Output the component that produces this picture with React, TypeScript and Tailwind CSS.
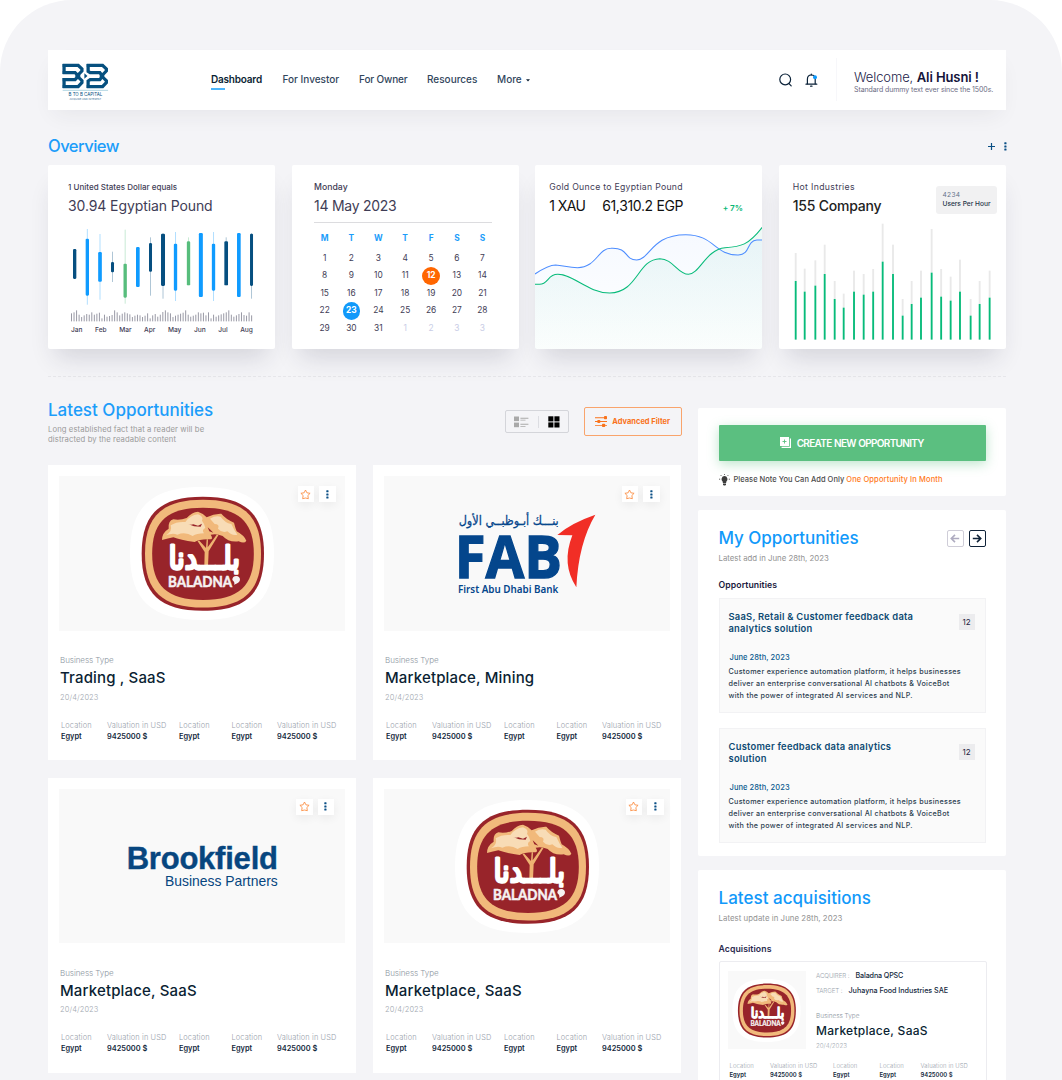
import React from "react";

/* ---------- small icons ---------- */

function SearchIcon() {
  return (
    <svg width="14" height="14" viewBox="0 0 14 14" fill="none" stroke="#0b2239" strokeWidth="1.2" strokeLinecap="round">
      <circle cx="6.2" cy="6.4" r="5.4" />
      <path d="M10 10.6 12.2 12.8" />
    </svg>
  );
}

function BellIcon() {
  return (
    <svg width="13" height="14" viewBox="0 0 13 14" fill="none" stroke="#0b2239" strokeWidth="1.2" strokeLinecap="round" strokeLinejoin="round">
      <path d="M2.4 10.8V6.2C2.4 3.8 4 2 6.3 2s3.9 1.8 3.9 4.2v4.6" />
      <path d="M1 11.2H11.8M6.3 1V1.8M5.6 13.2H7" />
      <circle cx="10" cy="4.2" r="2" fill="#0f9bff" stroke="none" />
    </svg>
  );
}

function Dots() {
  return (
    <svg width="3" height="9" viewBox="0 0 3 9" fill="#0a4f85">
      <rect x=".3" y=".3" width="2.2" height="2" rx=".5" />
      <rect x=".3" y="3.4" width="2.2" height="2" rx=".5" />
      <rect x=".3" y="6.5" width="2.2" height="2" rx=".5" />
    </svg>
  );
}

function Star() {
  return (
    <svg width="11" height="11" viewBox="0 0 22 22" fill="none" stroke="#fb8a3c" strokeWidth="1.7" strokeLinejoin="round">
      <path d="M11 2 13.8 7.6 20.2 8.6 15.7 13 16.7 19.4 11 18 5.3 19.4 6.3 13 1.8 8.6 8.2 7.6Z" />
    </svg>
  );
}

function Arrow({ flip }: { flip?: boolean }) {
  return (
    <svg width="10" height="9" viewBox="0 0 10 9" fill="none" stroke="currentColor" strokeWidth="1.6" className={flip ? "rotate-180" : ""}>
      <path d="M.8 4.5H8.6M5 .9 8.7 4.5 5 8.1" />
    </svg>
  );
}

/* ---------- logos ---------- */

function BrandLogo() {
  return (
    <svg width="49.5" height="38" viewBox="178 189 144 114" preserveAspectRatio="none" fill="none">
      <g stroke="#06507f" strokeWidth="9.5" strokeLinejoin="miter">
        <path d="M180 196H225L236 207V213L222 228L236 242V248L225 260H180" />
        <path d="M184 192V222M184 234V264" />
        <path d="M180 218H216L226 228L216 239H180" />
        <path d="M250 196H296L307 207V213L293 228L307 242V248L296 260H250" />
        <path d="M254 192V214L260 218H288L296 228L288 239H260L254 243V264" />
      </g>
      <path d="M243 220 252 228 243 236Z" fill="#06507f" />
      <path d="M180 271H312" stroke="#8fc3d6" strokeWidth="2" />
      <text x="197" y="287" fontSize="15" textLength="98" lengthAdjust="spacingAndGlyphs" fill="#06507f" className="font-['Inter']">B TO B CAPITAL</text>
      <text x="200" y="299" fontSize="8" textLength="92" lengthAdjust="spacingAndGlyphs" fill="#3c7399" className="font-['Inter']">ACQUIRE AND INTEREST</text>
    </svg>
  );
}

function blob(cx: number, cy: number, rx: number, ry: number) {
  const k = 0.7;
  const a = rx * k;
  const b = ry * k;
  return `M${cx} ${cy - ry}C${cx + a} ${cy - ry} ${cx + rx} ${cy - b} ${cx + rx} ${cy}S${cx + a} ${cy + ry} ${cx} ${cy + ry}S${cx - rx} ${cy + b} ${cx - rx} ${cy}S${cx - a} ${cy - ry} ${cx} ${cy - ry}Z`;
}

function BaladnaLogo({ className }: { className: string }) {
  return (
    <svg viewBox="270 291 432 399" className={className}>
      <path d={blob(486, 490.5, 216, 199.5)} fill="#fff" />
      <path d={blob(488.5, 491, 183.5, 171)} fill="#98242a" />
      <path d={blob(489, 491, 174, 161.5)} fill="#f1b97b" />
      <path d={blob(489, 491.5, 152.5, 138.5)} fill="#98242a" />
      <path d="M493 528 494 486 472 452H478L498 474 500 448H504L503 472 530 434H536L506 484 504 528Z" fill="#eeb372" />
      <path d="M366 450Q366 428 386 416Q384 392 400 388Q420 392 440 384Q456 366 474 365Q490 370 500 382Q522 370 544 371Q556 386 582 398Q586 414 590 424Q612 436 619 452Q614 462 596 454Q566 458 548 438Q530 430 512 434Q520 446 512 448Q480 446 464 456Q420 450 400 442Q384 446 366 450Z" fill="#f1b97b" />
      <path d="M378 436Q398 424 392 406Q410 394 436 396Q450 376 474 373Q492 380 486 392Q494 402 496 414Q484 420 492 430Q470 430 458 438Q436 424 412 434Q398 428 378 436Z" fill="#f8dcb6" />
      <path d="M510 386Q526 376 542 380Q554 398 574 402Q582 420 592 434Q576 438 562 424Q546 430 534 416Q540 402 524 402Z" fill="#f8dcb6" />
      <path d="M444 402Q452 406 460 403L474 407 486 401 482 410 462 409ZM503 412 512 420 520 428 508 424Z" fill="#98242a" />
      <text x="386" y="538" fontSize="94" textLength="214" lengthAdjust="spacingAndGlyphs" fill="#fff" stroke="#fff" strokeWidth="9" strokeLinejoin="round" className="font-['DejaVu_Sans']">بلـــدنا</text>
      <text x="384" y="590" fontSize="43" fontWeight="700" textLength="192" lengthAdjust="spacingAndGlyphs" fill="#f6f2f2" stroke="#f6f2f2" strokeWidth="1.5" className="font-['Lato']">BALADNA</text>
      <path d="M577 570Q577 558 589 558Q600 559 600 570Q598 580 582 584Q586 578 577 570Z" fill="#f6f2f2" />
    </svg>
  );
}

function FabLogo() {
  return (
    <svg viewBox="266 370 410 245" className="mt-[3px] h-[81.7px] w-[136.7px] overflow-visible">
      <g fill="#04468c">
        <text x="265" y="404" fontSize="38" textLength="300" lengthAdjust="spacingAndGlyphs" stroke="#04468c" strokeWidth=".8" className="font-['DejaVu_Sans']">بنـــك أبـوظبــي الأول</text>
        <text x="253" y="561" fontSize="176" fontWeight="700" textLength="322" lengthAdjust="spacingAndGlyphs" stroke="#04468c" strokeWidth="4" className="font-['Open_Sans']">FAB</text>
        <text x="263" y="608" fontSize="31" fontWeight="600" textLength="301" lengthAdjust="spacingAndGlyphs" className="font-['Noto_Sans']">First Abu Dhabi Bank</text>
      </g>
      <path d="M675 372Q624 458 618 590Q572 520 606 434L561 433Q600 398 675 372Z" fill="#f12e26" />
    </svg>
  );
}

function BrookfieldLogo() {
  return (
    <div className="mt-[3px] ml-[-1.5px] flex w-[153px] flex-col items-end font-['Liberation_Sans'] text-[#07467f]">
      <span className="text-[31px] leading-[26px] font-bold tracking-[-0.22px] whitespace-nowrap [-webkit-text-stroke:0.4px_#07467f]">Brookfield</span>
      <span className="mt-[1.5px] text-[13.9px] leading-[16px] whitespace-nowrap">Business Partners</span>
    </div>
  );
}

/* ---------- header ---------- */

function Header() {
  return (
    <header className="flex h-[60.5px] items-center bg-white shadow-[0_10px_22px_-6px_rgba(40,40,60,0.07)]">
      <div className="ml-[13.5px] w-[149.5px] pt-[4px]">
        <BrandLogo />
      </div>
      <nav className="mt-[-1px] flex items-center gap-[20.5px] text-[10px] leading-[14px] font-medium text-[#31465c]">
        <a className="relative w-[51px] font-semibold tracking-[-0.2px] whitespace-nowrap text-[#0b1f33]">
          Dashboard
          <span className="absolute top-[15.5px] left-0 h-[2px] w-[14px] bg-[#4cb5fb]" />
        </a>
        <a className="w-[56px] whitespace-nowrap">For Investor</a>
        <a className="w-[47.5px] tracking-[-0.15px] whitespace-nowrap">For Owner</a>
        <a className="w-[49.5px] whitespace-nowrap">Resources</a>
        <a className="flex items-center gap-[4px] whitespace-nowrap">
          More
          <svg width="4" height="3" viewBox="0 0 4 3" fill="#0b1f33" className="mt-[2px]"><path d="M0 .3H4L2 2.6Z" /></svg>
        </a>
      </nav>
      <div className="ml-auto flex items-center">
        <SearchIcon />
        <span className="ml-[12.5px]"><BellIcon /></span>
        <span className="ml-[17.5px] h-[43px] w-px bg-[#f7f7fa]" />
        <div className="ml-[17.5px] w-[152px] pt-[4px]">
          <p className="text-[13px] leading-[16px] font-light tracking-[-0.1px] whitespace-nowrap text-[#23234a]">
            Welcome, <b className="font-semibold text-[#14143a]">Ali Husni !</b>
          </p>
          <p className="text-[7px] leading-[10px] tracking-[-0.09px] whitespace-nowrap text-[#6c6c84]">Standard dummy text ever since the 1500s.</p>
        </div>
      </div>
    </header>
  );
}

/* ---------- overview ---------- */

const statCard = "relative flex h-[184px] flex-col rounded-[2px] bg-white shadow-[0_16px_24px_-8px_rgba(40,40,70,0.16)]";

// x, wick top, wick bottom, body top, body bottom, colour, body width
const candles: [number, number, number, number, number, string, number][] = [
  [104, 267, 357, 267, 357, "#064f80", 10],
  [142, 207, 434, 236, 407, "#0f9bff", 10],
  [180, 222, 419, 276, 365, "#0f9bff", 11],
  [217.5, 275, 366, 306, 337, "#064f80", 9],
  [255.5, 209, 431, 311, 413, "#57bd7c", 10],
  [293.5, 261, 381, 261, 381, "#0f9bff", 11],
  [331.5, 232, 407, 249, 335, "#064f80", 9],
  [369, 220, 416, 221, 378, "#064f80", 12],
  [406.5, 216, 423, 251, 392, "#0f9bff", 10],
  [445.5, 232, 376, 244, 376, "#57bd7c", 10],
  [482.5, 219, 411, 219, 411, "#0f9bff", 12],
  [520.5, 216, 423, 251, 392, "#0f9bff", 10],
  [558.5, 232, 376, 244, 376, "#064f80", 11],
  [596.5, 219, 411, 219, 411, "#0f9bff", 11],
  [634.5, 220, 416, 221, 378, "#064f80", 9],
];

const volume = [24, 27, 33, 20, 13, 18, 22, 20, 27, 20, 23, 26, 9, 20, 14, 16, 19, 33, 27, 18, 23, 27, 24, 21, 13, 17, 20, 18, 13, 17, 24, 9, 18, 22, 14, 20, 28, 33, 27, 24, 13, 17, 20, 23, 26, 33, 20, 14, 17, 20, 27, 24, 26, 18, 27, 9, 20, 14, 18, 21, 24, 27, 33, 20, 14, 18, 22, 27, 19, 17, 27, 18];

function DollarCard() {
  return (
    <section className={statCard}>
      <div className="pt-[16px] pl-[20px] text-[#3f3d56]">
        <p className="text-[8px] leading-[13px] font-medium tracking-[0.02px] whitespace-nowrap">1 United States Dollar equals</p>
        <p className="mt-[3px] text-[14px] leading-[18px] tracking-[-0.1px] whitespace-nowrap">30.94 Egyptian Pound</p>
      </div>
      <svg viewBox="90 204 560 284" className="mt-[13px] ml-[22px] h-[94.7px] w-[186.7px]">
        {candles.map(([x, wt, wb, t, b, c, w]) => (
          <g key={x}>
            <rect x={x - 1.5} y={wt} width="3" height={wb - wt} fill={c} opacity=".32" />
            <rect x={x - w / 2} y={t} width={w} height={b - t} rx="3.5" fill={c} />
          </g>
        ))}
        {volume.map((h, i) => (
          <rect key={i} x={93 + i * 7.61} y={484 - h} width="3" height={h} fill="#9a9aa6" />
        ))}
      </svg>
      <div className="mt-[2px] ml-[23px] flex w-[182px] justify-between text-[6.6px] leading-[10px] font-medium text-[#3f3d56]">
        {["Jan", "Feb", "Mar", "Apr", "May", "Jun", "Jul", "Aug"].map((m) => (
          <span key={m}>{m}</span>
        ))}
      </div>
    </section>
  );
}

const days = [...Array.from({ length: 31 }, (_, i) => i + 1), 1, 2, 3, 3];

function CalendarCard() {
  return (
    <section className={statCard}>
      <div className="pt-[16px] pl-[22.5px] text-[#3f3d56]">
        <p className="text-[8.7px] leading-[13px] font-medium">Monday</p>
        <p className="mt-[3px] text-[14px] leading-[18px] tracking-[-0.27px] whitespace-nowrap">14 May 2023</p>
      </div>
      <div className="mt-[6.5px] ml-[22.5px] h-px w-[178px] bg-[#dcdcdf]" />
      <div className="mt-[7.5px] ml-[19.8px] grid grid-cols-[26.5px_27px_27px_26.5px_25.5px_26px_25px] text-center text-[8.4px] leading-[17.6px] text-[#3f3d56]">
        {["M", "T", "W", "T", "F", "S", "S"].map((d, i) => (
          <span key={i} className="pb-[2px] font-bold text-[#1c9dfa]">{d}</span>
        ))}
        {days.map((d, i) => {
          if (i === 11 || i === 22)
            return (
              <span key={i} className="flex justify-center">
                <span className={`h-[17.6px] w-[17.6px] rounded-full font-bold text-white ${i === 11 ? "bg-[#ff6600]" : "bg-[#1199fa]"}`}>{d}</span>
              </span>
            );
          return <span key={i} className={i > 30 ? "text-[#c9cde6]" : ""}>{d}</span>;
        })}
      </div>
    </section>
  );
}

function GoldCard() {
  const blue = "M30 342C60 322 75 315 92 315C115 316 130 323 158 323C215 322 220 265 258 265C315 262 295 298 336 300C378 297 380 224 484 224C570 224 570 286 642 285C680 284 665 243 698 240H714";
  const green = "M30 373H44C70 373 68 343 98 343C145 342 190 399 255 399C340 398 338 298 406 296C445 296 460 343 492 343C525 343 545 268 602 263C650 260 672 256 714 202";
  return (
    <section className={statCard}>
      <div className="pt-[16px] pl-[14px]">
        <p className="text-[8.7px] leading-[13px] tracking-[0.28px] whitespace-nowrap text-[#3f3d56]">Gold Ounce to Egyptian Pound</p>
        <p className="mt-[3px] flex items-baseline text-[14px] leading-[18px] whitespace-nowrap text-[#111]">
          <span className="w-[53px] tracking-[-0.55px]">1 XAU</span>
          <span className="w-[120.5px] tracking-[-0.35px]">61,310.2 EGP</span>
          <span className="text-[8.2px] font-semibold tracking-[-0.1px] text-[#08b776]">+ 7%</span>
        </p>
      </div>
      <svg viewBox="30 195 684 372" preserveAspectRatio="none" className="mt-auto h-[124px] w-full">
        <defs>
          <linearGradient id="gb" x1="0" y1="0" x2="0" y2="1">
            <stop offset="0" stopColor="#4d8dff" stopOpacity=".05" />
            <stop offset="1" stopColor="#4d8dff" stopOpacity="0" />
          </linearGradient>
          <linearGradient id="gg" x1="0" y1="0" x2="0" y2="1">
            <stop offset="0" stopColor="#10a37f" stopOpacity=".07" />
            <stop offset="1" stopColor="#12b886" stopOpacity=".02" />
          </linearGradient>
        </defs>
        <path d={`${blue}V567H30Z`} fill="url(#gb)" />
        <path d={`${green}V567H30Z`} fill="url(#gg)" />
        <path d={blue} fill="none" stroke="#4d8dff" strokeWidth="3.2" />
        <path d={green} fill="none" stroke="#08bb7a" strokeWidth="3.2" />
      </svg>
    </section>
  );
}

// x, full bar top, filled bar top
const industry = [
  [78, 280, 364], [105, 327, 396], [137, 302, 378], [165, 255, 343], [195, 364, 418], [222, 402, 444], [253, 333, 396],
  [282, 343, 405], [310.5, 328, 396], [339, 192, 306], [370, 255, 343], [399, 418, 468], [426, 364, 433], [454, 333, 414],
  [486, 208, 339], [514.5, 328, 411], [543, 351, 423], [571, 300, 396], [603, 418, 468], [630, 364, 433], [660, 333, 414],
];

function IndustryCard() {
  return (
    <section className={statCard}>
      <div className="pt-[16px] pl-[14px]">
        <p className="text-[8.7px] leading-[13px] tracking-[0.33px] whitespace-nowrap text-[#3f3d56]">Hot Industries</p>
        <p className="mt-[3px] text-[14px] leading-[18px] font-medium tracking-[-0.22px] whitespace-nowrap text-[#222]">155 Company</p>
      </div>
      <div className="absolute top-[21px] right-[9px] h-[28px] w-[61.5px] rounded-[3px] bg-[#f1f1f2] pt-[5px] pl-[7px] text-[6.6px] leading-[9px] whitespace-nowrap">
        <p className="tracking-[0.3px] text-[#64748b]">4234</p>
        <p className="font-medium text-[#1e3448]">Users Per Hour</p>
      </div>
      <svg viewBox="70 190 600 352" className="mt-[7.8px] ml-[14.3px] h-[117.3px] w-[200px]">
        {industry.map(([x, t, g]) => (
          <g key={x}>
            <rect x={x - 2.8} y={t} width="5.6" height={g - t} fill="#e9e9e9" />
            <rect x={x - 2.8} y={g} width="5.6" height={540 - g} fill="#08bb7a" />
          </g>
        ))}
      </svg>
    </section>
  );
}

/* ---------- opportunities grid ---------- */

function Info({ label, value }: { label: string; value: string }) {
  return (
    <div className="whitespace-nowrap">
      <p className="font-light tracking-[0.02em] text-[#98a1ab]">{label}</p>
      <p className="mt-px font-semibold text-[#14293d]">{value}</p>
    </div>
  );
}

const infoItems: [string, string][] = [
  ["Location", "Egypt"],
  ["Valuation in USD", "9425000 $"],
  ["Location", "Egypt"],
  ["Location", "Egypt"],
  ["Valuation in USD", "9425000 $"],
];

function OppCard({ title, logo, actions }: { title: string; logo: React.ReactNode; actions: string }) {
  return (
    <article className="h-[295px] bg-white px-[11px] pt-[11px]">
      <div className="relative flex h-[154.5px] items-center justify-center bg-[#f9f9f9]">
        {logo}
        <div className={`absolute top-[10px] flex gap-[5px] ${actions}`}>
          <span className="flex h-[16px] w-[16.5px] items-center justify-center bg-white shadow-[0_3px_10px_rgba(0,0,0,0.06)]"><Star /></span>
          <span className="flex h-[16px] w-[16.5px] items-center justify-center bg-white shadow-[0_3px_10px_rgba(0,0,0,0.06)]"><Dots /></span>
        </div>
      </div>
      <p className="mt-[24.5px] ml-[1px] text-[8px] leading-[10px] font-light tracking-[-0.05px] text-[#8b95a0]">Business Type</p>
      <h3 className="mt-[4px] ml-[1px] text-[15px] leading-[18px] font-medium tracking-[0.16px] whitespace-nowrap text-[#0b1f33]">{title}</h3>
      <p className="mt-[5.5px] ml-[1px] text-[7.5px] leading-[10px] font-light tracking-[0.1px] text-[#a0a8b0]">20/4/2023</p>
      <div className="mt-[18px] ml-[2px] grid grid-cols-[46px_72px_52.5px_45.5px_60px] text-[7.4px] leading-[10px]">
        {infoItems.map(([l, v], i) => (
          <Info key={i} label={l} value={v} />
        ))}
      </div>
    </article>
  );
}

function ListHeader() {
  return (
    <div className="flex h-[57px] items-start">
      <div>
        <h2 className="mt-[-8px] text-[17px] leading-[20px] font-medium whitespace-nowrap text-[#1c9dfa]">Latest Opportunities</h2>
        <p className="mt-[5px] w-[180px] text-[7.7px] leading-[10.4px] tracking-[0.1px] text-[#9a9a9a]">
          Long established fact that a reader will be<br />distracted by the readable content
        </p>
      </div>
      <div className="mt-[2px] ml-auto flex h-[23px] w-[64.5px] items-center rounded-[2px] border border-[#d4d5da]">
        <svg width="15" height="12" viewBox="0 0 15 12" className="ml-[8px]" fill="#a9a9a9">
          <rect x="0" y=".5" width="5" height="4.6" /><rect x="0" y="6.6" width="5" height="4.6" />
          <path d="M6.4 1.8H14.4V2.8H6.4ZM6.4 3.8H11.5V4.6H6.4ZM6.4 7.8H14.4V8.8H6.4ZM6.4 9.9H11.5V10.7H6.4Z" />
        </svg>
        <span className="ml-[9px] h-[12px] w-px bg-[#dcdde2]" />
        <svg width="12" height="12" viewBox="0 0 12 12" className="ml-[9.5px]" fill="#000">
          <rect x=".3" y=".3" width="5.1" height="5.1" /><rect x="6.4" y=".3" width="5.1" height="5.1" />
          <rect x=".3" y="6.4" width="5.1" height="5.1" /><rect x="6.4" y="6.4" width="5.1" height="5.1" />
        </svg>
      </div>
      <button className="mt-[-1px] mr-[-0.8px] ml-[14.8px] flex h-[29px] w-[98px] items-center rounded-[2px] border border-[#f9a46c] text-[7.5px] font-bold whitespace-nowrap text-[#f9731c]">
        <svg width="12" height="11" viewBox="0 0 12 11" className="mr-[5.5px] ml-[10px]" fill="#f9731c">
          <path d="M0 1.3H12V2.2H0ZM0 5.1H12V6H0ZM0 8.9H12V9.8H0Z" />
          <rect x="9" y="0" width="3" height="3.2" rx=".8" /><rect x="2.3" y="4" width="3" height="3.1" rx=".8" /><rect x="7" y="7.8" width="3.2" height="3.2" rx=".8" />
        </svg>
        Advanced Filter
      </button>
    </div>
  );
}

/* ---------- sidebar ---------- */

function CreateCard() {
  return (
    <section className="h-[88px] rounded-[2px] bg-white px-[20.5px] pt-[17px]">
      <button className="flex h-[35.5px] w-full items-center justify-center rounded-[1px] bg-[#5bbf80] text-[10px] font-semibold tracking-[-0.67px] text-white shadow-[0_3px_12px_rgba(91,191,128,0.4)]">
        <svg width="11" height="11" viewBox="0 0 11 11" className="mr-[5.5px]" fill="#fff">
          <path d="M0 0H9V9H0ZM9.8 1.6H11V11H1.6V9.8H9.8Z" />
          <path d="M4.5 2.5V6.5M2.5 4.5H6.5" stroke="#5bbf80" strokeWidth=".9" />
        </svg>
        <span className="pt-px [word-spacing:0.5px]">CREATE NEW OPPORTUNITY</span>
      </button>
      <p className="mt-[13px] flex items-center text-[7.5px] leading-[12px] font-medium whitespace-nowrap text-[#4b4b4b]">
        <svg width="11" height="12" viewBox="0 0 11 12" className="mr-[4px]" fill="#3c3c3c">
          <path d="M5.5 2A3.2 3.2 0 0 0 3.6 7.6L3.9 9H7.1L7.4 7.6A3.2 3.2 0 0 0 5.5 2Z" />
          <path d="M4 9.6H7V10.6L6.3 11.6H4.7L4 10.6Z" />
          <path d="M5.5 .1V1M1.6 1 2.4 1.9M9.4 1 8.6 1.9M0 5.2H1.2M9.8 5.2H11" stroke="#3c3c3c" strokeWidth=".8" />
        </svg>
        <span className="tracking-[0.03px]">Please Note You Can Add Only <span className="tracking-[0.13px] text-[#ff7a1a]">One Opportunity In Month</span></span>
      </p>
    </section>
  );
}

function FeedItem({ a, b }: { a: string; b: string }) {
  return (
    <div className="relative h-[115.5px] border border-[#f2f2f4] bg-[#fafafa] pt-[12px] pl-[9px]">
      <h4 className="text-[9.4px] leading-[12px] font-semibold tracking-[0.24px] whitespace-nowrap text-[#0d4a73]">{a}<br />{b}</h4>
      <span className="absolute top-[15px] right-[10px] h-[16px] w-[16px] bg-[#ececee] text-center text-[8px] leading-[16px] text-[#1c1c3c]">12</span>
      <p className="mt-[17px] ml-px text-[7.5px] leading-[11px] font-medium tracking-[0.07px] text-[#0d5c8f]">June 28th, 2023</p>
      <p className="mt-[3px] text-[7.2px] leading-[12px] font-medium tracking-[0.3px] whitespace-nowrap text-[#2c3e50]">
        Customer experience automation platform, it helps businesses<br />
        deliver an enterprise conversational AI chatbots &amp; VoiceBot<br />
        with the power of integrated AI services and NLP.
      </p>
    </div>
  );
}

function MyOpportunities() {
  return (
    <section className="h-[346px] rounded-[2px] bg-white px-[20.5px] pt-[17.5px]">
      <div className="flex items-start justify-between">
        <h2 className="text-[17px] leading-[20px] font-medium tracking-[-0.05px] whitespace-nowrap text-[#1199fa]">My Opportunities</h2>
        <div className="mt-[2px] flex gap-[5px]">
          <span className="flex h-[17px] w-[17px] items-center justify-center rounded-[2px] border border-[#cfcdd8] text-[#aeabc0]"><Arrow flip /></span>
          <span className="flex h-[17px] w-[17px] items-center justify-center rounded-[2px] border border-[#0f2238] text-[#0f2238]"><Arrow /></span>
        </div>
      </div>
      <p className="mt-[5.5px] text-[7.8px] leading-[10px] text-[#929292]">Latest add in June 28th, 2023</p>
      <p className="mt-[15.5px] text-[8.7px] leading-[12px] font-semibold tracking-[0.08px] text-[#1a1a3e]">Opportunities</p>
      <div className="mt-[7px] flex flex-col gap-[14.5px]">
        <FeedItem a="SaaS, Retail & Customer feedback data" b="analytics solution" />
        <FeedItem a="Customer feedback data analytics" b="solution" />
      </div>
    </section>
  );
}

function Acquisitions() {
  return (
    <section className="h-[230px] rounded-[2px] bg-white px-[20.5px] pt-[18px]">
      <h2 className="text-[17px] leading-[20px] font-medium tracking-[0.03px] whitespace-nowrap text-[#1199fa]">Latest acquisitions</h2>
      <p className="mt-[5px] text-[7.8px] leading-[10px] tracking-[0.06px] text-[#929292]">Latest update in June 28th, 2023</p>
      <p className="mt-[20px] text-[8.7px] leading-[12px] font-semibold tracking-[0.08px] text-[#2a2a4e]">Acquisitions</p>
      <div className="mt-[6px] h-[160px] w-[268px] rounded-[2px] border border-[#ececf0] px-[8px] pt-[9px]">
        <div className="flex">
          <div className="flex h-[78px] w-[78.5px] items-center justify-center bg-[#f9f9f9]">
            <BaladnaLogo className="h-[63px] w-[69px]" />
          </div>
          <div className="ml-[10px] whitespace-nowrap">
            <p className="flex text-[7.2px] leading-[10px] font-medium tracking-[-0.15px] text-[#14293d]">
              <span className="w-[39.5px] text-[6.2px] font-light tracking-[-0.1px] text-[#98a1ab]">ACQUIRER :</span>Baladna QPSC
            </p>
            <p className="mt-[4.5px] flex text-[7.2px] leading-[10px] font-medium tracking-[-0.03px] text-[#14293d]">
              <span className="w-[32.5px] text-[6.2px] font-light tracking-[-0.1px] text-[#98a1ab]">TARGET :</span>Juhayna Food Industries SAE
            </p>
            <p className="mt-[15.5px] text-[6.4px] leading-[10px] font-light text-[#8b95a0]">Business Type</p>
            <p className="mt-[1.5px] text-[12px] leading-[16px] font-medium tracking-[0.27px] text-[#0b1f33]">Marketplace, SaaS</p>
            <p className="mt-[2px] text-[6.2px] leading-[10px] font-light text-[#a0a8b0]">20/4/2023</p>
          </div>
        </div>
        <div className="mt-[11px] ml-[2px] grid grid-cols-[40.5px_63px_46.5px_41px_50px] text-[5.9px] leading-[8.5px]">
          {infoItems.map(([l, v], i) => (
            <Info key={i} label={l} value={v} />
          ))}
        </div>
      </div>
    </section>
  );
}

/* ---------- page ---------- */

export default function App() {
  return (
    <div className="h-[1080px] w-[1062px] overflow-hidden bg-white font-['Inter',sans-serif]">
      <div className="h-[1200px] rounded-t-[72px] bg-[#f4f4f7] pt-[49.5px] pr-[56px] pl-[48px]">
        <Header />
        <div className="mt-[26px] flex h-[20px] items-center justify-between">
          <h2 className="text-[16.6px] leading-[20px] font-medium tracking-[-0.55px] text-[#1c9dfa]">Overview</h2>
          <div className="mr-[-1px] flex items-center gap-[9px]">
            <svg width="7" height="7" viewBox="0 0 7 7" stroke="#0a4f85" strokeWidth="1.2"><path d="M3.5 0V7M0 3.5H7" /></svg>
            <Dots />
          </div>
        </div>
        <div className="mt-[9px] grid grid-cols-4 gap-[16.4px]">
          <DollarCard />
          <CalendarCard />
          <GoldCard />
          <IndustryCard />
        </div>
        <div className="mt-[27px] border-t border-dashed border-[#e6e6ea]" />
        <div className="mt-[31px] flex gap-[17px]">
          <main className="w-[633px]">
            <ListHeader />
            <div className="grid grid-cols-2 gap-x-[17px] gap-y-[17.5px]">
              <OppCard title="Trading , SaaS" logo={<BaladnaLogo className="mt-[1px] h-[133px] w-[144px]" />} actions="right-[9.5px]" />
              <OppCard title="Marketplace, Mining" logo={<FabLogo />} actions="right-[10.5px]" />
              <OppCard title="Marketplace, SaaS" logo={<BrookfieldLogo />} actions="right-[11px]" />
              <OppCard title="Marketplace, SaaS" logo={<BaladnaLogo className="mt-[1px] h-[133px] w-[144px]" />} actions="right-[6.5px]" />
            </div>
          </main>
          <aside className="flex w-[308px] flex-col gap-[14px]">
            <CreateCard />
            <MyOpportunities />
            <Acquisitions />
          </aside>
        </div>
      </div>
    </div>
  );
}
